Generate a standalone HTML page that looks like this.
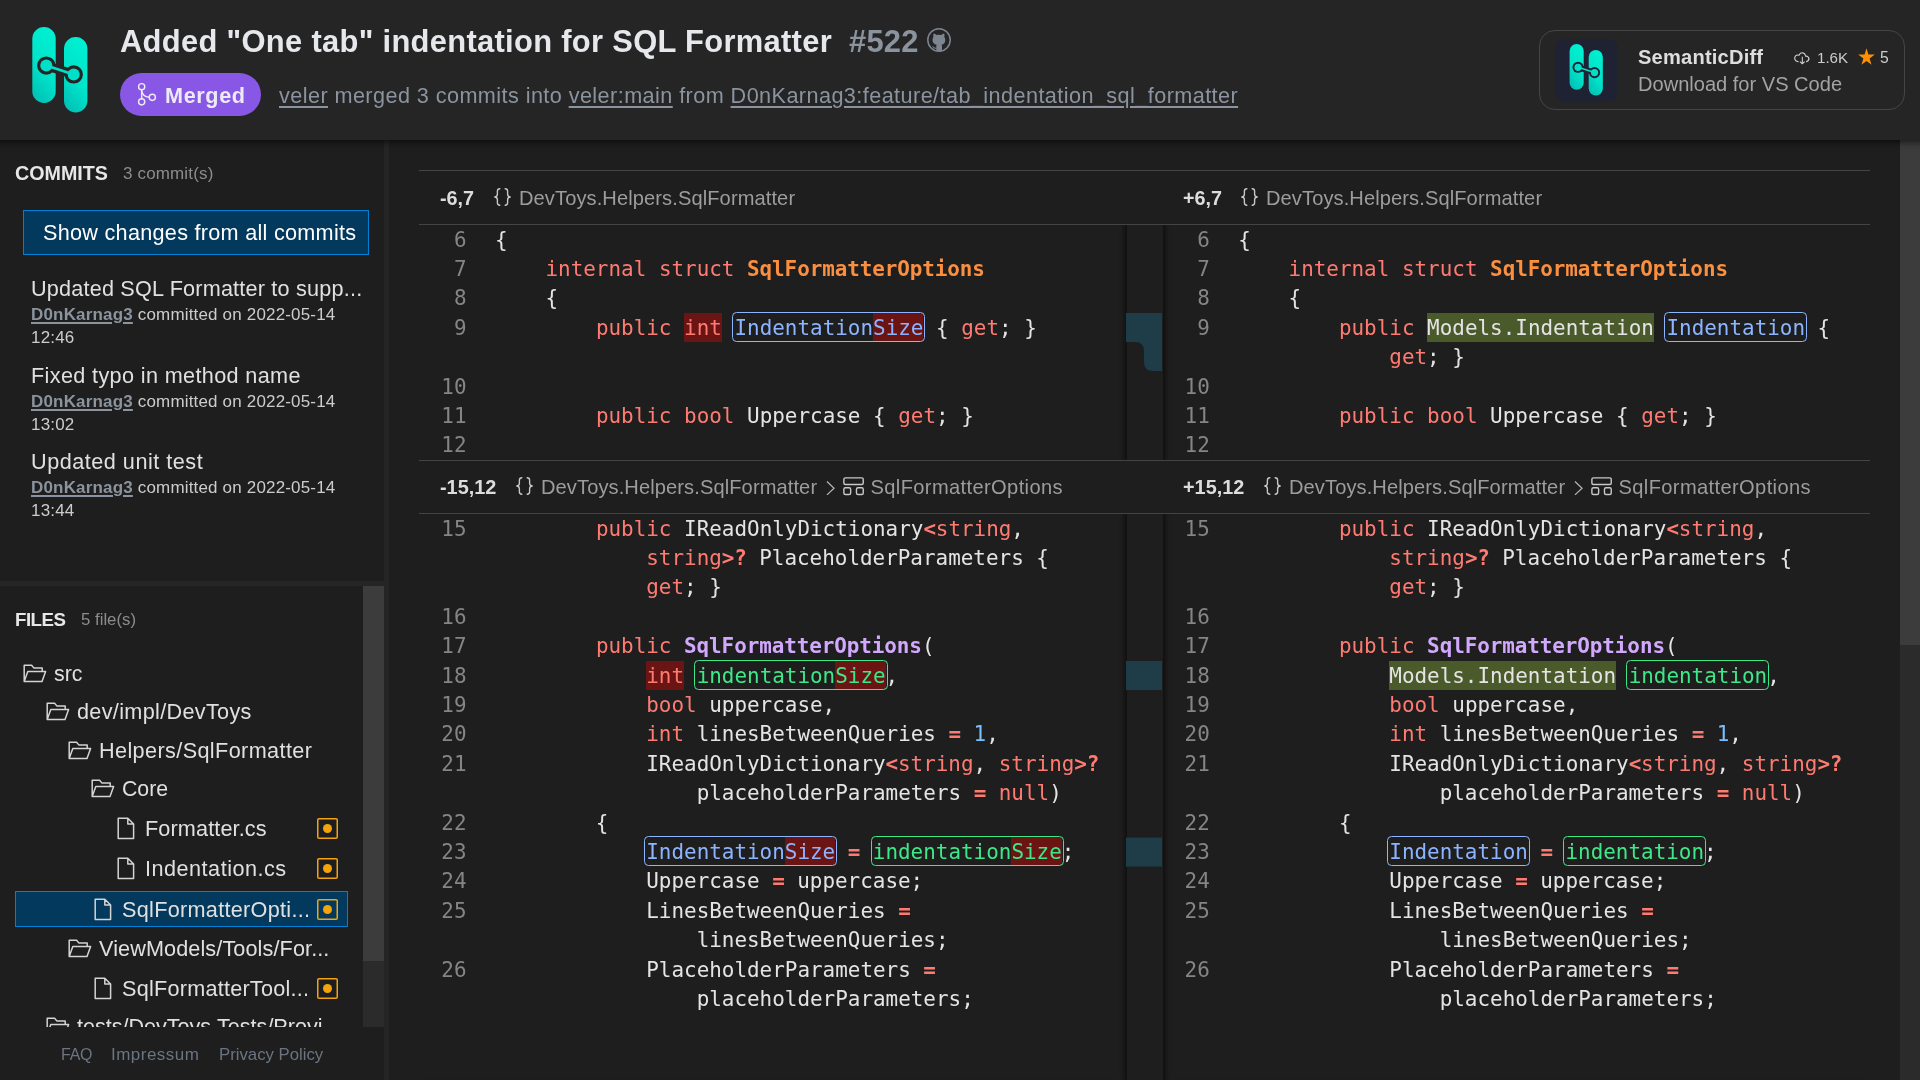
<!DOCTYPE html>
<html lang="en"><head>
<meta charset="utf-8">
<title>Added "One tab" indentation for SQL Formatter #522 - SemanticDiff</title>
<style>
html,body{margin:0;padding:0}
body{width:1920px;height:1080px;overflow:hidden;background:#1e1e1e;color:#cccccc;position:relative;
  font-family:"Liberation Sans",sans-serif;--fs:1.03;--ls:1;-webkit-font-smoothing:antialiased}
a{color:inherit}
.abs{position:absolute;white-space:nowrap}
svg{display:block}

/* ---------- top bar ---------- */
#top{position:absolute;left:0;top:0;width:1920px;height:140px;background:#252526;z-index:5}
#top::before{content:"";position:absolute;left:-30px;right:-30px;top:0;height:140px;z-index:-1;background:#252526;box-shadow:0 1px 7px 1px rgba(0,0,0,.62)}
#top,#side,#main{will-change:transform}
#logo{left:28px;top:22px}
#title{left:120px;top:21px;height:40px;line-height:40px;font-weight:700;color:#e6e8ec;
  font-size:calc(30px*var(--fs))}
#title .num{color:#8b949e;margin-left:8px}
#ghmark{left:927px;top:28px}
#badge{left:120px;top:73px;width:141px;height:43px;border-radius:22px;background:#8957e5}
#badge svg{position:absolute;left:0;top:0}
#badge span{position:absolute;left:45px;top:0;line-height:45px;font-weight:700;color:#eceaf6;
  font-size:calc(21px*var(--fs))}
#sub{left:279px;top:80px;height:30px;line-height:30px;color:#8b949e;font-size:calc(21px*var(--fs))}
#sub a{text-decoration:underline;text-decoration-thickness:1.5px;text-underline-offset:3px}

#card{left:1539px;top:30px;width:364px;height:78px;border:1px solid #454545;border-radius:16px}
#card .tile{position:absolute;left:15px;top:8px;width:62.5px;height:62.5px;border-radius:10px;background:#1f2233}
#card .tile svg{position:absolute;left:12px;top:2.4px}
#card .nm{position:absolute;left:98px;top:11px;line-height:30px;font-weight:700;color:#dedede;
  font-size:calc(19.5px*var(--fs))}
#card .ds{position:absolute;left:98px;top:38px;line-height:30px;color:#a3a3a3;
  font-size:calc(19.5px*var(--fs))}
#card .st{position:absolute;top:10.6px;line-height:30px;color:#cccccc;font-size:calc(15.3px*var(--fs))}

/* ---------- sidebar ---------- */
#side{position:absolute;left:0;top:140px;width:384px;height:940px;background:#1e1e1e}
#vsplit{position:absolute;left:384px;top:140px;width:5px;height:940px;background:#252526}
#hsplit{position:absolute;left:0;top:441px;width:384px;height:5px;background:#252526}
.h{font-weight:700;color:#e7e7e7;font-size:calc(19.3px*var(--fs));line-height:30px;left:15px}
.cnt{color:#8c8c8c;font-size:calc(16.5px*var(--fs));line-height:30px}
#allc{left:23px;top:70.3px;width:344px;height:42.6px;border:1px solid #007fd4;background:#04395e;color:#ffffff;
  font-size:calc(21px*var(--fs));line-height:43px}
#allc span{position:absolute;left:19px;top:0}
.ct{left:31px;color:#e0e0e0;font-size:calc(21px*var(--fs));line-height:29.4px}
.cm{left:31px;color:#cccccc;font-size:calc(16.5px*var(--fs));line-height:23.1px;white-space:nowrap}
.cm a{font-weight:700;color:#8b949e;text-decoration:underline;text-decoration-thickness:1.5px;text-underline-offset:2px}
#files{position:absolute;left:0;top:446px;width:363px;height:441px;overflow:hidden}
#fsb{position:absolute;left:363px;top:446px;width:21px;height:441px;background:#2b2b2b}
#fsb i{position:absolute;left:0;top:0;width:21px;height:375px;background:#3c3c3c}
.tr{position:absolute;height:30px;line-height:30px;color:#e0e0e0;font-size:calc(21px*var(--fs));white-space:nowrap}
.tr svg{position:absolute;top:6px}
.bdg{position:absolute;left:316.8px;width:21px;height:21px;box-shadow:inset 0 0 0 1.5px #f5a30a;border-radius:2px}
.bdg::after{content:"";position:absolute;left:6px;top:6px;width:9px;height:9px;border-radius:50%;background:#f5a30a}
#sel{position:absolute;left:15px;top:305px;width:331px;height:34px;border:1px solid #007fd4;background:#04395e}
#foot{position:absolute;left:0;top:887px;width:384px;height:53px;background:#1e1e1e}
#foot a{position:absolute;top:12px;line-height:30px;color:#6b7581;font-size:calc(16.5px*var(--fs));text-decoration:none}






/*MAINCSS*/
/* ---------- main diff ---------- */
#main{position:absolute;left:389px;top:140px;width:1511px;height:940px;background:#1e1e1e;overflow:hidden}
#msb{position:absolute;left:1900px;top:140px;width:20px;height:940px;background:#2b2b2b}
#msb i{position:absolute;left:0;top:0;width:20px;height:505px;background:#3c3c3c}
.hh{position:absolute;left:30px;width:1451px;height:53px;border-top:1px solid #444;border-bottom:1px solid #444;
  color:#9d9d9d;font-size:calc(19.5px*var(--fs));line-height:30px}
.hh b{position:absolute;top:11.5px;color:#dcdcdc;font-weight:700;white-space:nowrap}
.hh span{position:absolute;top:11.5px;white-space:nowrap}
.hh svg{position:absolute}
.h2 b,.h2 span{top:10.7px}
.h2 svg{margin-top:-.8px}
.pane{position:absolute;overflow:hidden;font-family:"DejaVu Sans Mono","Liberation Mono",monospace;font-size:20.93px;line-height:29.4px;color:#e4e4e4}
.pane.l{left:30px;width:707.5px;box-shadow:inset -7px 0 6px -6px rgba(0,0,0,.75)}
.pane.r{left:774px;width:707px;box-shadow:inset 7px 0 6px -6px rgba(0,0,0,.75)}
.r_{position:relative;height:29.4px;white-space:pre}
.ln{position:absolute;left:0;top:.7px;width:46.8px;text-align:right;color:#858585}
.cd{position:absolute;left:76.1px;top:.7px}
.pane.r .cd{left:75.15px}
.pane.l .ln{width:47.5px}
.k{color:#ff7b72}
.o{color:#ff7b72;font-weight:700;letter-spacing:-.2px}
.t{color:#fa8f40;font-weight:700;letter-spacing:-.08px}
.f{color:#d2a8ff;font-weight:700;letter-spacing:-.08px}
.n{color:#79c0ff}
.del,.ins{padding:2.5px 0 2.1px}
.del{background:#6b1414}
.ins{background:#4b5a2a}
.mb,.mg{position:relative;padding:2.5px 0 2.1px}
.mb{color:#8cb4ff}.mg{color:#3ee888}
.mb::after,.mg::after{content:"";position:absolute;left:-2.3px;right:-1.9px;top:-1px;bottom:-.4px;border:1px solid currentColor;border-radius:4.5px}
.mb .del,.mg .del{border-radius:0 3px 3px 0}
#gut{position:absolute;left:737px;top:0;width:37px;height:940px}
/*/MAINCSS*/
</style>
</head>
<body>

<div id="top">
  <svg id="logo" class="abs" width="64" height="96" viewBox="0 0 64 96">
    <defs>
      <linearGradient id="lg" x1="0.7" y1="0" x2="0.3" y2="1">
        <stop offset="0" stop-color="#00f0d2"></stop><stop offset="0.55" stop-color="#00e4ca"></stop><stop offset="1" stop-color="#00c2b6"></stop>
      </linearGradient>
    </defs>
    <rect x="4.3" y="5" width="23.4" height="76" rx="11.7" fill="url(#lg)"></rect>
    <rect x="36" y="15" width="23.4" height="75.5" rx="11.7" fill="url(#lg)"></rect>
    <g stroke="#252526" stroke-linecap="round" fill="#252526">
      <line x1="18.3" y1="43.6" x2="45.7" y2="52.4" stroke-width="9.4"></line>
      <circle cx="18.3" cy="43.6" r="9.2" stroke="none"></circle><circle cx="45.7" cy="52.4" r="9.2" stroke="none"></circle>
    </g>
    <g stroke="#00e0c8" stroke-linecap="round" fill="#00e0c8">
      <line x1="18.3" y1="43.6" x2="45.7" y2="52.4" stroke-width="2.6"></line>
      <circle cx="18.3" cy="43.6" r="6" stroke="none"></circle><circle cx="45.7" cy="52.4" r="6" stroke="none"></circle>
    </g>
  </svg>
  <div id="title" class="abs" style="letter-spacing: 0.31px; margin-top: 1px;">Added "One tab" indentation for SQL Formatter <span class="num">#522</span></div>
  <svg id="ghmark" class="abs" width="24" height="24" viewBox="0 0 24 24"><circle cx="12" cy="12" r="11.2" fill="none" stroke="#7d8590" stroke-width="1.5"></circle><path fill="#7d8590" d="M6.6 5.6Q8.4 6 9.5 7.1Q12 6.5 14.3 7.1Q15.4 6 17.2 5.6Q17.8 7.5 17.3 9Q18.4 10.4 18.3 12.2Q18 15.9 14.6 16.7Q15 17.4 15 18.4V23H9.3V20.6Q6.9 21 6 19.4Q5.5 18.5 4.8 18.2Q6.2 17.9 6.9 19.1Q7.7 20.2 9.3 19.7V18.4Q9.3 17.4 9.6 16.7Q5.8 16 5.5 12.2Q5.4 10.4 6.4 9Q6 7.5 6.6 5.6Z"></path></svg>
  <div id="badge" class="abs">
    <svg width="60" height="43" viewBox="0 0 60 43" fill="none" stroke="#eceaf6" stroke-width="1.45" stroke-linecap="round">
      <circle cx="21.67" cy="13.7" r="3.1"></circle><circle cx="21.67" cy="28.85" r="3.1"></circle><circle cx="32.3" cy="24.3" r="3.1"></circle>
      <path d="M21.67 16.8V25.75M21.75 17.2Q22.4 23.9 29.2 24.2"></path>
    </svg>
    <span style="letter-spacing: 0.62px;">Merged</span>
  </div>
  <div id="sub" class="abs" style="letter-spacing: 0.43px; margin-top: 1px;"><a>veler</a> merged 3 commits into <a>veler:main</a> from <a>D0nKarnag3:feature/tab_indentation_sql_formatter</a></div>

  <div id="card" class="abs">
    <div class="tile">
      <svg width="38.6" height="57.9" viewBox="0 0 64 96">
        <rect x="4.3" y="5" width="23.4" height="76" rx="11.7" fill="url(#lg)"></rect>
        <rect x="36" y="15" width="23.4" height="75.5" rx="11.7" fill="url(#lg)"></rect>
        <g stroke="#1f2233" stroke-linecap="round" fill="#1f2233">
          <line x1="18.3" y1="43.6" x2="45.7" y2="52.4" stroke-width="9.4"></line>
          <circle cx="18.3" cy="43.6" r="9.2" stroke="none"></circle><circle cx="45.7" cy="52.4" r="9.2" stroke="none"></circle>
        </g>
        <g stroke="#00e0c8" stroke-linecap="round" fill="#00e0c8">
          <line x1="18.3" y1="43.6" x2="45.7" y2="52.4" stroke-width="2.6"></line>
          <circle cx="18.3" cy="43.6" r="6" stroke="none"></circle><circle cx="45.7" cy="52.4" r="6" stroke="none"></circle>
        </g>
      </svg>
    </div>
    <div class="nm" style="letter-spacing: 0.21px;">SemanticDiff</div>
    <div class="ds" style="font-size: 20.07px;">Download for VS Code</div>
    <svg class="abs" style="left:253px;top:17.5px" width="17.5" height="17.5" viewBox="0 0 16 16"><path fill="#cccccc" d="M11.957 6h.05a2.99 2.99 0 0 1 2.116.879 3.003 3.003 0 0 1 0 4.242 2.99 2.99 0 0 1-2.117.879v-1a2.002 2.002 0 0 0 0-4h-.914l-.123-.857a2.49 2.49 0 0 0-2.126-2.122A2.478 2.478 0 0 0 6.231 5.5l-.333.762-.809-.189A2.49 2.49 0 0 0 4.523 6c-.662 0-1.297.263-1.764.732A2.503 2.503 0 0 0 4.523 11h.498v1h-.498a3.486 3.486 0 0 1-2.628-1.16 3.502 3.502 0 0 1 1.958-5.78 3.462 3.462 0 0 1 1.468.04 3.486 3.486 0 0 1 3.657-2.06A3.479 3.479 0 0 1 11.957 6zm-5.25 5.121l1.314 1.314V7h.994v5.4l1.278-1.279.707.707-2.146 2.147h-.708L6 11.829l.707-.708z"></path></svg>
    <div class="st" style="left: 277px; font-size: 15.11px; margin-top: 1px;">1.6K</div>
    <svg class="abs" style="left:317px;top:16px" width="19" height="19" viewBox="0 0 16 16"><path fill="#ff8e00" d="M9.595 6.252L8 1 6.405 6.252H1l4.373 3.4L3.75 15 8 11.695 12.25 15l-1.623-5.348L15 6.252H9.595z"></path></svg>
    <div class="st" style="left: 340px; font-size: 15.73px; margin-top: 1px;">5</div>
  </div>
</div>

<div id="side">
  <div class="abs h" style="top: 18px; font-size: 19.68px;">COMMITS</div>
  <div class="abs cnt" style="left: 123px; top: 18px; letter-spacing: 0.16px; margin-top: 1px;">3 commit(s)</div>
  <div id="allc" class="abs"><span style="letter-spacing: 0.28px;">Show changes from all commits</span></div>
  <div class="abs ct" style="top: 133.9px; letter-spacing: 0.2px;">Updated SQL Formatter to supp...</div>
<div class="abs cm" style="top: 162px; letter-spacing: 0.18px; margin-top: 1px;"><a>D0nKarnag3</a> committed on 2022-05-14<br>12:46</div>

  <div class="abs ct" style="top: 220.6px; letter-spacing: 0.36px;">Fixed typo in method name</div>
<div class="abs cm" style="top: 248.7px; letter-spacing: 0.18px; margin-top: 1px;"><a>D0nKarnag3</a> committed on 2022-05-14<br>13:02</div>

  <div class="abs ct" style="top: 307.2px; letter-spacing: 0.51px;">Updated unit test</div>
<div class="abs cm" style="top: 335.3px; letter-spacing: 0.18px; margin-top: 1px;"><a>D0nKarnag3</a> committed on 2022-05-14<br>13:44</div>

  <div id="hsplit"></div>
  <div id="files">
    <div class="abs h" style="top: 18px; font-size: 18.69px; letter-spacing: -0.52px; margin-top: 1px;">FILES</div>
    <div class="abs cnt" style="left: 81px; top: 18px; font-size: 16.79px; margin-top: 1px;">5 file(s)</div>
    <div id="sel"></div>
    <div class="tr" style="left:0;top:72px;width:363px"><svg style="left:23px" width="24" height="19" viewBox="0 0 24 19" fill="none" stroke="#d4d4d4" stroke-width="1.5" stroke-linejoin="round"><path d="M1.2 17.6V1.2H8.6L10.8 3.9H19.2V7.4M1.2 17.6L4.8 7.4H22.6L19 17.6Z"></path></svg><span style="position: absolute; left: 54px; font-size: 21.31px; margin-top: 1px;">src</span></div>
<div class="tr" style="left:0;top:110px;width:363px"><svg style="left:46px" width="24" height="19" viewBox="0 0 24 19" fill="none" stroke="#d4d4d4" stroke-width="1.5" stroke-linejoin="round"><path d="M1.2 17.6V1.2H8.6L10.8 3.9H19.2V7.4M1.2 17.6L4.8 7.4H22.6L19 17.6Z"></path></svg><span style="position: absolute; left: 77px; letter-spacing: 0.33px; margin-top: 1px;">dev/impl/DevToys</span></div>
<div class="tr" style="left:0;top:149px;width:363px"><svg style="left:68px" width="24" height="19" viewBox="0 0 24 19" fill="none" stroke="#d4d4d4" stroke-width="1.5" stroke-linejoin="round"><path d="M1.2 17.6V1.2H8.6L10.8 3.9H19.2V7.4M1.2 17.6L4.8 7.4H22.6L19 17.6Z"></path></svg><span style="position: absolute; left: 99px; letter-spacing: 0.39px; margin-top: 1px;">Helpers/SqlFormatter</span></div>
<div class="tr" style="left:0;top:187px;width:363px"><svg style="left:91px" width="24" height="19" viewBox="0 0 24 19" fill="none" stroke="#d4d4d4" stroke-width="1.5" stroke-linejoin="round"><path d="M1.2 17.6V1.2H8.6L10.8 3.9H19.2V7.4M1.2 17.6L4.8 7.4H22.6L19 17.6Z"></path></svg><span style="position: absolute; left: 122px; font-size: 21.26px; margin-top: 1px;">Core</span></div>
<div class="tr" style="left:0;top:227px;width:363px"><svg style="left:117px;top:4px" width="18" height="23" viewBox="0 0 18 23" fill="none" stroke="#d4d4d4" stroke-width="1.5" stroke-linejoin="round"><path d="M1.2 1.2H10.8L16.6 7V21.6H1.2ZM10.8 1.2V7H16.6"></path></svg><span style="position: absolute; left: 145px; letter-spacing: 0.13px; margin-top: 1px;">Formatter.cs</span><i class="bdg" style="top:4.5px"></i></div>
<div class="tr" style="left:0;top:267px;width:363px"><svg style="left:117px;top:4px" width="18" height="23" viewBox="0 0 18 23" fill="none" stroke="#d4d4d4" stroke-width="1.5" stroke-linejoin="round"><path d="M1.2 1.2H10.8L16.6 7V21.6H1.2ZM10.8 1.2V7H16.6"></path></svg><span style="position: absolute; left: 145px; letter-spacing: 0.5px; margin-top: 1px;">Indentation.cs</span><i class="bdg" style="top:4.5px"></i></div>
<div class="tr" style="left:0;top:308px;width:363px"><svg style="left:94px;top:4px" width="18" height="23" viewBox="0 0 18 23" fill="none" stroke="#d4d4d4" stroke-width="1.5" stroke-linejoin="round"><path d="M1.2 1.2H10.8L16.6 7V21.6H1.2ZM10.8 1.2V7H16.6"></path></svg><span style="position: absolute; left: 122px; letter-spacing: 0.3px; margin-top: 1px;">SqlFormatterOpti...</span><i class="bdg" style="top:4.5px"></i></div>
<div class="tr" style="left:0;top:347px;width:363px"><svg style="left:68px" width="24" height="19" viewBox="0 0 24 19" fill="none" stroke="#d4d4d4" stroke-width="1.5" stroke-linejoin="round"><path d="M1.2 17.6V1.2H8.6L10.8 3.9H19.2V7.4M1.2 17.6L4.8 7.4H22.6L19 17.6Z"></path></svg><span style="position: absolute; left: 99px; letter-spacing: 0.11px; margin-top: 1px;">ViewModels/Tools/For...</span></div>
<div class="tr" style="left:0;top:387px;width:363px"><svg style="left:94px;top:4px" width="18" height="23" viewBox="0 0 18 23" fill="none" stroke="#d4d4d4" stroke-width="1.5" stroke-linejoin="round"><path d="M1.2 1.2H10.8L16.6 7V21.6H1.2ZM10.8 1.2V7H16.6"></path></svg><span style="position: absolute; left: 122px; letter-spacing: 0.24px; margin-top: 1px;">SqlFormatterTool...</span><i class="bdg" style="top:4.5px"></i></div>
<div class="tr" style="left:0;top:425px;width:363px"><svg style="left:46px" width="24" height="19" viewBox="0 0 24 19" fill="none" stroke="#d4d4d4" stroke-width="1.5" stroke-linejoin="round"><path d="M1.2 17.6V1.2H8.6L10.8 3.9H19.2V7.4M1.2 17.6L4.8 7.4H22.6L19 17.6Z"></path></svg><span style="position: absolute; left: 77px; font-size: 21.56px; margin-top: 1px;">tests/DevToys.Tests/Provi...</span></div>

  </div>
  <div id="fsb"><i></i></div>
  <div id="foot"><a style="left: 61px; font-size: 15.98px; letter-spacing: -0.2px; margin-top: 1px;">FAQ</a><a style="left: 111px; letter-spacing: 0.49px; margin-top: 1px;">Impressum</a><a style="left: 219px; font-size: 16.74px; margin-top: 1px;">Privacy Policy</a></div>
</div>
<div id="vsplit"></div>
<!--MAIN-->
<div id="main">
<div class="hh" style="top:30px"><b style="left: 21px; font-size: 19.79px;">-6,7</b><svg style="left:73.5px;top:17.2px" width="19" height="18" viewBox="0 0 18.4 17.6" fill="none" stroke="#c8c8c8" stroke-width="1.35" stroke-linecap="round"><path d="M6.6 .7Q4.2 .7 4.2 3.1V6.2Q4.2 8.8 1.2 8.8Q4.2 8.8 4.2 11.4V14.5Q4.2 16.9 6.6 16.9M11.8 .7Q14.2 .7 14.2 3.1V6.2Q14.2 8.8 17.2 8.8Q14.2 8.8 14.2 11.4V14.5Q14.2 16.9 11.8 16.9"></path></svg><span style="left: 100px; letter-spacing: 0.1px;">DevToys.Helpers.SqlFormatter</span><b style="left: 764px; font-size: 19.78px;">+6,7</b><svg style="left:820.5px;top:17.2px" width="19" height="18" viewBox="0 0 18.4 17.6" fill="none" stroke="#c8c8c8" stroke-width="1.35" stroke-linecap="round"><path d="M6.6 .7Q4.2 .7 4.2 3.1V6.2Q4.2 8.8 1.2 8.8Q4.2 8.8 4.2 11.4V14.5Q4.2 16.9 6.6 16.9M11.8 .7Q14.2 .7 14.2 3.1V6.2Q14.2 8.8 17.2 8.8Q14.2 8.8 14.2 11.4V14.5Q14.2 16.9 11.8 16.9"></path></svg><span style="left: 847px; letter-spacing: 0.1px;">DevToys.Helpers.SqlFormatter</span></div>

<div class="pane l" style="top:85px;height:235.2px">
<div class="r_"><span class="ln">6</span><span class="cd">{</span></div>
<div class="r_"><span class="ln">7</span><span class="cd">    <span class="k">internal</span> <span class="k">struct</span> <span class="t">SqlFormatterOptions</span></span></div>
<div class="r_"><span class="ln">8</span><span class="cd">    {</span></div>
<div class="r_"><span class="ln">9</span><span class="cd">        <span class="k">public</span> <span class="del"><span class="k">int</span></span> <span class="mb">Indentation<span class="del">Size</span></span> { <span class="k">get</span>; }</span></div>
<div class="r_"><span class="ln"></span><span class="cd"></span></div>
<div class="r_"><span class="ln">10</span><span class="cd"></span></div>
<div class="r_"><span class="ln">11</span><span class="cd">        <span class="k">public</span> <span class="k">bool</span> Uppercase { <span class="k">get</span>; }</span></div>
<div class="r_"><span class="ln">12</span><span class="cd"></span></div>
</div>
<div class="pane r" style="top:85px;height:235.2px">
<div class="r_"><span class="ln">6</span><span class="cd">{</span></div>
<div class="r_"><span class="ln">7</span><span class="cd">    <span class="k">internal</span> <span class="k">struct</span> <span class="t">SqlFormatterOptions</span></span></div>
<div class="r_"><span class="ln">8</span><span class="cd">    {</span></div>
<div class="r_"><span class="ln">9</span><span class="cd">        <span class="k">public</span> <span class="ins">Models.Indentation</span> <span class="mb">Indentation</span> {</span></div>
<div class="r_"><span class="ln"></span><span class="cd">            <span class="k">get</span>; }</span></div>
<div class="r_"><span class="ln">10</span><span class="cd"></span></div>
<div class="r_"><span class="ln">11</span><span class="cd">        <span class="k">public</span> <span class="k">bool</span> Uppercase { <span class="k">get</span>; }</span></div>
<div class="r_"><span class="ln">12</span><span class="cd"></span></div>
</div>
<div class="hh h2" style="top:320px;height:52px;margin-top:0"><b style="left: 21px; font-size: 19.9px;">-15,12</b><svg style="left:95.5px;top:17.2px" width="19" height="18" viewBox="0 0 18.4 17.6" fill="none" stroke="#c8c8c8" stroke-width="1.35" stroke-linecap="round"><path d="M6.6 .7Q4.2 .7 4.2 3.1V6.2Q4.2 8.8 1.2 8.8Q4.2 8.8 4.2 11.4V14.5Q4.2 16.9 6.6 16.9M11.8 .7Q14.2 .7 14.2 3.1V6.2Q14.2 8.8 17.2 8.8Q14.2 8.8 14.2 11.4V14.5Q14.2 16.9 11.8 16.9"></path></svg><span style="left: 122px; letter-spacing: 0.1px;">DevToys.Helpers.SqlFormatter</span><svg style="left:406.5px;top:20.4px" width="9.2" height="14.6" viewBox="0 0 10 16" fill="none" stroke="#b4b4b4" stroke-width="1.35"><path d="M1 .6L8.8 7.9L1 15.2"></path></svg><svg style="left:423.5px;top:16.5px" width="21.7" height="18.8" viewBox="0 0 23 20" fill="none" stroke="#c8c8c8" stroke-width="1.5"><rect x=".9" y=".9" width="20.6" height="7" rx="1.6"></rect><rect x=".9" y="11.5" width="7.2" height="7.2" rx="1.6"></rect><rect x="14.3" y="11.5" width="7.2" height="7.2" rx="1.6"></rect></svg><span style="left: 451.5px; letter-spacing: 0.38px;">SqlFormatterOptions</span><b style="left: 764px; font-size: 19.87px;">+15,12</b><svg style="left:843.5px;top:17.2px" width="19" height="18" viewBox="0 0 18.4 17.6" fill="none" stroke="#c8c8c8" stroke-width="1.35" stroke-linecap="round"><path d="M6.6 .7Q4.2 .7 4.2 3.1V6.2Q4.2 8.8 1.2 8.8Q4.2 8.8 4.2 11.4V14.5Q4.2 16.9 6.6 16.9M11.8 .7Q14.2 .7 14.2 3.1V6.2Q14.2 8.8 17.2 8.8Q14.2 8.8 14.2 11.4V14.5Q14.2 16.9 11.8 16.9"></path></svg><span style="left: 870px; letter-spacing: 0.1px;">DevToys.Helpers.SqlFormatter</span><svg style="left:1154.5px;top:20.4px" width="9.2" height="14.6" viewBox="0 0 10 16" fill="none" stroke="#b4b4b4" stroke-width="1.35"><path d="M1 .6L8.8 7.9L1 15.2"></path></svg><svg style="left:1171.5px;top:16.5px" width="21.7" height="18.8" viewBox="0 0 23 20" fill="none" stroke="#c8c8c8" stroke-width="1.5"><rect x=".9" y=".9" width="20.6" height="7" rx="1.6"></rect><rect x=".9" y="11.5" width="7.2" height="7.2" rx="1.6"></rect><rect x="14.3" y="11.5" width="7.2" height="7.2" rx="1.6"></rect></svg><span style="left: 1199.5px; letter-spacing: 0.38px;">SqlFormatterOptions</span></div>

<div class="pane l" style="top:374px;height:566px">
<div class="r_"><span class="ln">15</span><span class="cd">        <span class="k">public</span> IReadOnlyDictionary<span class="o">&lt;</span><span class="k">string</span>,</span></div>
<div class="r_"><span class="ln"></span><span class="cd">            <span class="k">string</span><span class="o">&gt;?</span> PlaceholderParameters {</span></div>
<div class="r_"><span class="ln"></span><span class="cd">            <span class="k">get</span>; }</span></div>
<div class="r_"><span class="ln">16</span><span class="cd"></span></div>
<div class="r_"><span class="ln">17</span><span class="cd">        <span class="k">public</span> <span class="f">SqlFormatterOptions</span>(</span></div>
<div class="r_"><span class="ln">18</span><span class="cd">            <span class="del"><span class="k">int</span></span> <span class="mg">indentation<span class="del">Size</span></span>,</span></div>
<div class="r_"><span class="ln">19</span><span class="cd">            <span class="k">bool</span> uppercase,</span></div>
<div class="r_"><span class="ln">20</span><span class="cd">            <span class="k">int</span> linesBetweenQueries <span class="o">=</span> <span class="n">1</span>,</span></div>
<div class="r_"><span class="ln">21</span><span class="cd">            IReadOnlyDictionary<span class="o">&lt;</span><span class="k">string</span>, <span class="k">string</span><span class="o">&gt;?</span></span></div>
<div class="r_"><span class="ln"></span><span class="cd">                placeholderParameters <span class="o">=</span> <span class="k">null</span>)</span></div>
<div class="r_"><span class="ln">22</span><span class="cd">        {</span></div>
<div class="r_"><span class="ln">23</span><span class="cd">            <span class="mb">Indentation<span class="del">Size</span></span> <span class="o">=</span> <span class="mg">indentation<span class="del">Size</span></span>;</span></div>
<div class="r_"><span class="ln">24</span><span class="cd">            Uppercase <span class="o">=</span> uppercase;</span></div>
<div class="r_"><span class="ln">25</span><span class="cd">            LinesBetweenQueries <span class="o">=</span></span></div>
<div class="r_"><span class="ln"></span><span class="cd">                linesBetweenQueries;</span></div>
<div class="r_"><span class="ln">26</span><span class="cd">            PlaceholderParameters <span class="o">=</span></span></div>
<div class="r_"><span class="ln"></span><span class="cd">                placeholderParameters;</span></div>
</div>
<div class="pane r" style="top:374px;height:566px">
<div class="r_"><span class="ln">15</span><span class="cd">        <span class="k">public</span> IReadOnlyDictionary<span class="o">&lt;</span><span class="k">string</span>,</span></div>
<div class="r_"><span class="ln"></span><span class="cd">            <span class="k">string</span><span class="o">&gt;?</span> PlaceholderParameters {</span></div>
<div class="r_"><span class="ln"></span><span class="cd">            <span class="k">get</span>; }</span></div>
<div class="r_"><span class="ln">16</span><span class="cd"></span></div>
<div class="r_"><span class="ln">17</span><span class="cd">        <span class="k">public</span> <span class="f">SqlFormatterOptions</span>(</span></div>
<div class="r_"><span class="ln">18</span><span class="cd">            <span class="ins">Models.Indentation</span> <span class="mg">indentation</span>,</span></div>
<div class="r_"><span class="ln">19</span><span class="cd">            <span class="k">bool</span> uppercase,</span></div>
<div class="r_"><span class="ln">20</span><span class="cd">            <span class="k">int</span> linesBetweenQueries <span class="o">=</span> <span class="n">1</span>,</span></div>
<div class="r_"><span class="ln">21</span><span class="cd">            IReadOnlyDictionary<span class="o">&lt;</span><span class="k">string</span>, <span class="k">string</span><span class="o">&gt;?</span></span></div>
<div class="r_"><span class="ln"></span><span class="cd">                placeholderParameters <span class="o">=</span> <span class="k">null</span>)</span></div>
<div class="r_"><span class="ln">22</span><span class="cd">        {</span></div>
<div class="r_"><span class="ln">23</span><span class="cd">            <span class="mb">Indentation</span> <span class="o">=</span> <span class="mg">indentation</span>;</span></div>
<div class="r_"><span class="ln">24</span><span class="cd">            Uppercase <span class="o">=</span> uppercase;</span></div>
<div class="r_"><span class="ln">25</span><span class="cd">            LinesBetweenQueries <span class="o">=</span></span></div>
<div class="r_"><span class="ln"></span><span class="cd">                linesBetweenQueries;</span></div>
<div class="r_"><span class="ln">26</span><span class="cd">            PlaceholderParameters <span class="o">=</span></span></div>
<div class="r_"><span class="ln"></span><span class="cd">                placeholderParameters;</span></div>
</div>
<svg id="gut" viewBox="0 0 37 940"><g fill="#1f3c49">
<path d="M0 173H36V231H27Q18 231 18 222V211Q18 202 9 202H0Z"></path>
<rect x="0" y="521" width="36" height="29"></rect><rect x="0" y="697.6" width="36" height="29"></rect></g></svg>
</div>
<div id="msb"><i></i></div>
<!--/MAIN-->


</body></html>
